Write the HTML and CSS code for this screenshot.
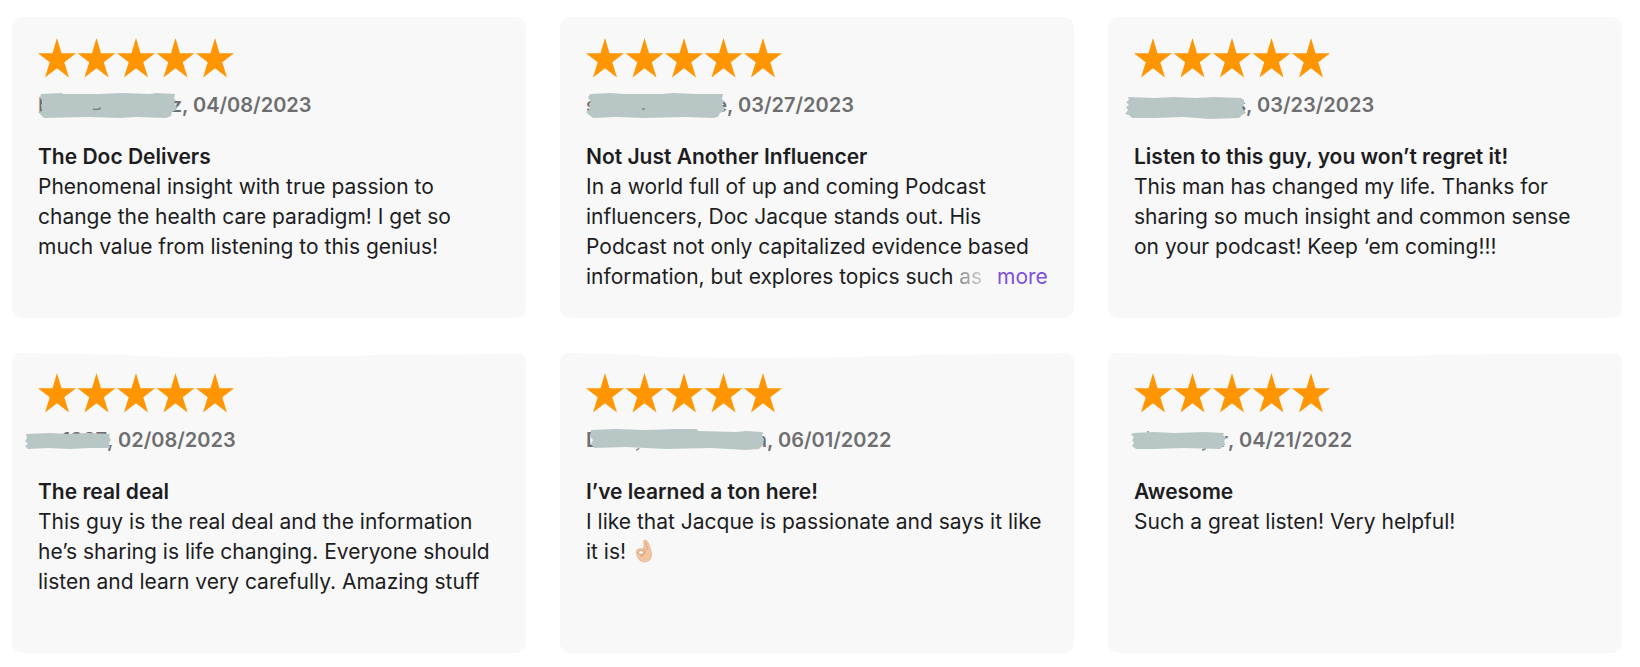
FILE: index.html
```html
<!DOCTYPE html>
<html lang="en">
<head>
    <meta charset="UTF-8">
    <meta name="viewport" content="width=device-width, initial-scale=1.0">
    <title>Podcast Reviews</title>
    <link rel="stylesheet" href="styles.css">
</head>
<body>
<!-- one star, reused by every rating -->
<svg class="defs" aria-hidden="true">
    <symbol id="star" viewBox="0 0 38 40">
        <path d="M19 0 L23.5 15.2 H38 L26.3 24.3 L31 39.5 L19 30.3 L7 39.5 L11.7 24.3 L0 15.2 H14.5 Z"/>
    </symbol>
    <symbol id="stars" viewBox="0 0 196 40">
        <use href="#star" x="0" width="38" height="40"/>
        <use href="#star" x="39.5" width="38" height="40"/>
        <use href="#star" x="79" width="38" height="40"/>
        <use href="#star" x="118.5" width="38" height="40"/>
        <use href="#star" x="158" width="38" height="40"/>
    </symbol>
</svg>

<main class="reviews">
    <article class="card">
        <svg class="stars" role="img" aria-label="5 out of 5 stars"><use href="#stars"/></svg>
        <p class="byline"><span class="name name-1"><span>F</span><span>z</span>
            <svg class="brush" viewBox="0 0 144 30"><path d="M3 3 L24 2 L25 3 L60 3 L85 2 L112 3 L118 2 L137 3 L136 8 L138 9 L136 12 L139 16 L138 19 L134 21 L133 25 L128 27 L98 26 L82 27 L50 26 L6 27 L2 23 L0 21 L4 20 L3 14 L5 11 L2 7 Z"/><path class="ink" d="M55 18 q4 1.5 8 -1"/></svg></span>, 04/08/2023</p>
        <h3>The Doc Delivers</h3>
        <p class="text">Phenomenal insight with true passion to change the health care paradigm! I get so much value from listening to this genius!</p>
    </article>

    <article class="card">
        <svg class="stars" role="img" aria-label="5 out of 5 stars"><use href="#stars"/></svg>
        <p class="byline"><span class="name name-2"><span>s</span><span>e</span>
            <svg class="brush" viewBox="0 0 141 30"><path d="M4 3 L24 2 L38 3 L75 3 L87 2 L110 3 L137 3 L136 8 L138 10 L136 14 L139 17 L138 20 L134 22 L132 26 L127 27 L100 26 L60 27 L30 26 L7 27 L3 24 L0 21 L4 18 L3 13 L5 10 L2 7 Z"/><path class="ink" d="M56 18 h3"/></svg></span>, 03/27/2023</p>
        <h3>Not Just Another Influencer</h3>
        <p class="text">In a world full of up and coming Podcast influencers, Doc Jacque stands out. His Podcast not only capitalized evidence based information, but explores topics such <span class="fade">as</span> <button class="more" type="button">more</button></p>
    </article>

    <article class="card">
        <svg class="stars" role="img" aria-label="5 out of 5 stars"><use href="#stars"/></svg>
        <p class="byline"><span class="name name-3"><span>s</span>
            <svg class="brush" viewBox="0 0 112 30"><path d="M-6 6 L20 7 L40 6 L62 7 L80 6 L107 7 L110 9 L110 13 L108 17 L112 22 L108 24 L105 27 L76 28 L50 26 L20 27 L-2 27 L-5 24 L-9 23 L-6 19 L-8 16 L-5 14 L-8 11 L-5 9 Z"/></svg></span>, 03/23/2023</p>
        <h3>Listen to this guy, you won’t regret it!</h3>
        <p class="text">This man has changed my life. Thanks for sharing so much insight and common sense on your podcast! Keep ‘em coming!!!</p>
    </article>

    <article class="card">
        <svg class="edge" viewBox="0 0 514 8" preserveAspectRatio="none"><path d="M0 0 H514 V1 Q480 2 380 3 Q260 5 200 5 Q150 5 110 3 Q60 1 0 1 Z"/></svg>
        <svg class="stars" role="img" aria-label="5 out of 5 stars"><use href="#stars"/></svg>
        <p class="byline"><span class="name name-4"><span>1997</span>
            <svg class="brush" viewBox="0 0 69 30"><path d="M-12 8 L12 7 L30 8 L50 7 L72 8 L71 11 L73 14 L71 17 L72 22 L50 22 L32 23 L10 22 L-10 23 L-13 20 L-10 18 L-13 15 L-11 12 Z"/></svg></span>, 02/08/2023</p>
        <h3>The real deal</h3>
        <p class="text">This guy is the real deal and the information he’s sharing is life changing. Everyone should listen and learn very carefully. Amazing stuff</p>
    </article>

    <article class="card">
        <svg class="edge" viewBox="0 0 514 8" preserveAspectRatio="none"><path d="M0 0 H514 V1 Q440 2 370 3 Q260 6 200 6 Q120 6 90 4 Q50 1 0 1 Z"/></svg>
        <svg class="stars" role="img" aria-label="5 out of 5 stars"><use href="#stars"/></svg>
        <p class="byline"><span class="name name-5"><span>D</span><span>n</span>
            <svg class="brush" viewBox="0 0 181 30"><path d="M5 4 L30 3 L60 4 L90 3 L111 3 L112 5 L150 6 L160 5 L177 6 L176 10 L178 13 L177 19 L173 23 L160 24 L125 22 L80 23 L40 21 L8 22 L5 18 L7 14 L4 10 Z"/><path class="ink" d="M50 24 q2 0 3 -2"/></svg></span>, 06/01/2022</p>
        <h3>I’ve learned a ton here!</h3>
        <p class="text">I like that Jacque is passionate and says it like it is!
            <svg class="emoji" viewBox="0 0 18 24" role="img" aria-label="OK hand"><path class="skin" d="M8.500 10 Q9.500 6 8.500 2.500 Q8.800 .7 10.200 1.200 Q11.200 .6 12 2 Q14.500 5 15.500 10 Q17.500 15 16 19 Q14 23.300 9 23 Q4 22.500 2.500 18 Q.5 14 1.500 11.500 Q3.500 8.500 8.500 10 Z"/><ellipse class="hole" cx="6" cy="13.500" rx="2.600" ry="2"/><path class="crease" d="M8.500 10 Q12 12 9 15.500 Q7.500 17.500 5 17 M10.500 3 Q12 6 12.200 11"/></svg></p>
    </article>

    <article class="card">
        <svg class="edge" viewBox="0 0 514 8" preserveAspectRatio="none"><path d="M0 0 H514 V1 Q480 2 380 2 Q260 5 200 5 Q150 5 110 3 Q60 1 0 1 Z"/></svg>
        <svg class="stars" role="img" aria-label="5 out of 5 stars"><use href="#stars"/></svg>
        <p class="byline"><span class="name name-6"><span>r</span>
            <svg class="brush" viewBox="0 0 94 30"><path class="ink" d="M14 5 v3 M68 24 q3 0 4 -3"/><path d="M-1 7 L20 6 L40 7 L70 6 L90 7 L89 10 L92 11 L90 15 L91 19 L86 23 L50 22 L20 23 L2 23 L-2 20 L0 17 L-2 14 L0 11 L-3 9 Z"/></svg></span>, 04/21/2022</p>
        <h3>Awesome</h3>
        <p class="text">Such a great listen! Very helpful!</p>
    </article>
</main>
</body>
</html>
```

FILE: styles.css
```css
body {
    margin: 0;
    font-family: Inter, "Liberation Sans", sans-serif;
    background-color: #ffffff;
    color: #1d1d1f;
}

.defs {
    position: absolute;
    width: 0;
    height: 0;
}

.reviews {
    display: grid;
    grid-template-columns: repeat(3, 1fr);
    grid-auto-rows: 1fr;
    gap: 34px;
    padding: 17px 18px 13px 12px;
}

.card {
    position: relative;
    box-sizing: border-box;
    min-height: 301px;
    padding: 21px 22px 21px 26px;
    background-color: #f8f8f8;
    border-radius: 10px;
    overflow: hidden;
}

/* uneven top edge of the second row */
.edge {
    position: absolute;
    top: 0;
    left: 0;
    width: 100%;
    height: 8px;
    fill: #ffffff;
}

.stars {
    display: block;
    width: 196px;
    height: 40px;
    fill: #ff9500;
}

.byline {
    margin: 12px 0 22px;
    font-size: 20px;
    line-height: 30px;
    font-weight: 600;
    color: #6e6e70;
}

.name {
    position: relative;
    display: inline-flex;
    justify-content: space-between;
}

.name-1 {
    width: 144px;
}

.name-2 {
    width: 141px;
}

.name-3 {
    width: 112px;
    justify-content: flex-end;
}

.name-4 {
    width: 69px;
    justify-content: flex-end;
}

.name-5 {
    width: 181px;
}

.name-6 {
    width: 94px;
    justify-content: flex-end;
}

/* paint stroke that hides the reviewer's name */
.brush {
    position: absolute;
    top: 1px;
    left: 0;
    width: 100%;
    height: 30px;
    overflow: visible;
    fill: #b8c7c6;
}

.brush .ink {
    fill: none;
    stroke: #7d8685;
    stroke-width: 1.5;
}

h3 {
    margin: 0;
    font-size: 21px;
    line-height: 30px;
    font-weight: 600;
}

.text {
    margin: 0;
    font-size: 21px;
    line-height: 30px;
}

.fade {
    color: transparent;
    background: linear-gradient(to right, #8a8a8a, #cccccc);
    background-clip: text;
    -webkit-background-clip: text;
}

.more {
    margin: 0 0 0 9px;
    padding: 0;
    border: none;
    background: none;
    font-family: inherit;
    font-size: 21px;
    color: #7d50df;
    cursor: pointer;
}

.emoji {
    width: 18px;
    height: 24px;
    margin-left: 3px;
    vertical-align: -4px;
}

.skin {
    fill: #f2c5a0;
    stroke: #dca47c;
    stroke-width: 0.5;
}

.hole {
    fill: #f8f8f8;
    stroke: #cf9368;
    stroke-width: 0.8;
}

.crease {
    fill: none;
    stroke: #d59b72;
    stroke-width: 0.8;
}
```
